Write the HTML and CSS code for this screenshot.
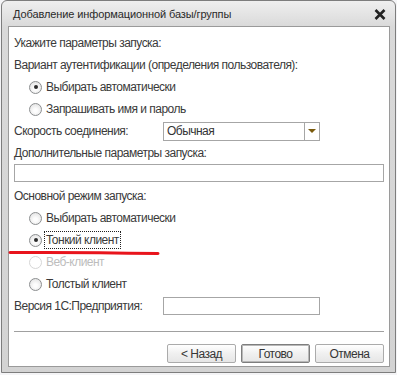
FILE: index.html
```html
<html>
<head>
<title>Добавление информационной базы/группы</title>
<link rel="stylesheet" href="styles.css">
</head>
<body>
<div class="window">
  <div class="titlebar">
    <span class="title">Добавление информационной базы/группы</span>
    <svg class="close" width="12" height="11" viewBox="0 0 12 11">
      <path d="M1.5 1 L10.5 10 M10.5 1 L1.5 10" stroke="#222" stroke-width="2.6" fill="none"/>
    </svg>
  </div>
  <div class="client">
    <div class="row">Укажите параметры запуска:</div>
    <div class="row">Вариант аутентификации (определения пользователя):</div>
    <div class="row radio checked"><span class="circle"></span><span>Выбирать автоматически</span></div>
    <div class="row radio"><span class="circle"></span><span>Запрашивать имя и пароль</span></div>
    <div class="row field">
      <span class="label">Скорость соединения:</span>
      <div class="select"><span class="value">Обычная</span><span class="drop"><span class="arrow"></span></span></div>
    </div>
    <div class="row short">Дополнительные параметры запуска:</div>
    <div class="input wide"></div>
    <div class="row gap">Основной режим запуска:</div>
    <div class="row radio"><span class="circle"></span><span>Выбирать автоматически</span></div>
    <div class="row radio checked"><span class="circle"></span><span class="focus">Тонкий клиент</span></div>
    <div class="row radio disabled"><span class="circle"></span><span>Веб-клиент</span></div>
    <div class="row radio"><span class="circle"></span><span>Толстый клиент</span></div>
    <div class="row short field">
      <span class="label">Версия 1С:Предприятия:</span>
      <div class="input version"></div>
    </div>
    <div class="sep"></div>
    <div class="buttons">
      <div class="btn">&lt; Назад</div>
      <div class="btn default">Готово</div>
      <div class="btn">Отмена</div>
    </div>
  </div>
  <svg class="mark" width="160" height="8" viewBox="0 0 160 8">
    <path d="M2 3.5 Q70 3 150 4.5" stroke="#e8141c" stroke-width="3" stroke-linecap="round" fill="none"/>
  </svg>
</div>
</body>
</html>
```

FILE: styles.css
```css
body {
  margin: 0;
  background: #f4f4f6;
  font-family: "Liberation Sans", Arial, sans-serif;
  font-size: 12px;
  letter-spacing: -0.52px;
  color: #3a3a3a;
}
.window {
  position: relative;
  width: 393px;
  height: 371px;
  margin: 0 0 0 1px;
  border: 1px solid #7d7d7d;
  border-radius: 6px 6px 0 0;
  background: linear-gradient(#efefef, #d9d9d9 26px, #d3d3d3);
  display: flex;
  flex-direction: column;
}
.titlebar {
  height: 25px;
  display: flex;
  align-items: center;
  justify-content: space-between;
  padding: 0 9px 0 11px;
}
.title {
  font-size: 11px;
  letter-spacing: -0.1px;
  color: #2a2a2a;
}
.close {
  margin-top: 1px;
}
.client {
  margin: 0 5px 5px 6px;
  flex: 1;
  background: #fff;
  border: 1px solid #9a9a9a;
  padding: 5px 5px 0 5px;
}
.row {
  height: 22px;
  display: flex;
  align-items: center;
  white-space: nowrap;
}
.row.short {
  height: 21px;
}
.row.gap {
  margin-top: 3px;
}
.radio {
  padding-left: 15px;
}
.circle {
  width: 11px;
  height: 11px;
  border: 1px solid #8c8e90;
  border-radius: 50%;
  background: radial-gradient(circle at 50% 60%, #fdfdfd 20%, #e4e4e4 80%);
  margin-right: 4px;
  display: flex;
  align-items: center;
  justify-content: center;
}
.checked .circle::after {
  content: "";
  width: 4px;
  height: 4px;
  border-radius: 50%;
  background: #2b2b2b;
}
.disabled {
  color: #bdbdbd;
}
.disabled .circle {
  border-color: #d6d6d6;
  background: #fff;
}
.focus {
  outline: 1px dotted #222;
  padding: 1px 1px 1px 1px;
  margin-left: -1px;
}
.label {
  width: 149px;
}
.select {
  width: 155px;
  height: 17px;
  border: 1px solid #a6a6a6;
  display: flex;
  align-items: center;
}
.value {
  flex: 1;
  padding-left: 3px;
  color: #333;
}
.drop {
  width: 14px;
  height: 17px;
  border-left: 1px solid #a6a6a6;
  display: flex;
  align-items: center;
  justify-content: center;
}
.arrow {
  width: 0;
  height: 0;
  border-left: 4px solid transparent;
  border-right: 4px solid transparent;
  border-top: 4px solid #7a5a0c;
}
.input {
  border: 1px solid #a6a6a6;
  height: 16px;
}
.input.wide {
  margin-top: 1px;
  width: 368px;
}
.input.version {
  width: 155px;
}
.sep {
  margin-top: 15px;
  height: 1px;
  background: #a0a0a0;
}
.buttons {
  margin-top: 12px;
  display: flex;
  justify-content: flex-end;
  gap: 5px;
}
.btn {
  width: 67px;
  height: 17px;
  border: 1px solid #ababab;
  border-radius: 2px;
  background: linear-gradient(#ffffff, #f0f0f0 50%, #e6e6e6);
  display: flex;
  align-items: center;
  justify-content: center;
  color: #363636;
}
.btn.default {
  width: 67px;
  border: 1px solid #7e7e7e;
  box-shadow: inset 0 0 0 1px #b8b8b8;
}
.mark {
  position: absolute;
  left: 6px;
  top: 248px;
}
```
